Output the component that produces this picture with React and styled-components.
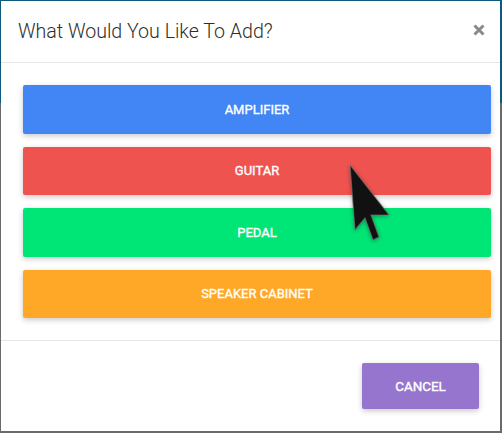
import React from "react";
import styled, { createGlobalStyle } from "styled-components";

const GlobalStyle = createGlobalStyle`
    html, body {
        margin: 0;
        padding: 0;
        width: 502px;
        height: 433px;
        overflow: hidden;
    }
    body {
        background: linear-gradient(
            to bottom,
            #0b5a7c 0px,
            #0b5a7c 103px,
            #6a6a6a 103px,
            #6a6a6a 100%
        );
        font-family: Roboto, "Liberation Sans", sans-serif;
    }
`;

const Modal = styled.div`
    position: relative;
    margin: 1px 2px 2px 1px;
    width: 499px;
    height: 430px;
    background: #fff;
    display: flex;
    flex-direction: column;
    box-sizing: border-box;
`;

const Header = styled.div`
    height: 62px;
    flex-shrink: 0;
    box-sizing: border-box;
    padding: 0 15px 0 17px;
    display: flex;
    align-items: center;
    justify-content: space-between;
    border-bottom: 1px solid #e6e6e6;
`;

const Title = styled.h4`
    margin: 0;
    font-size: 19.6px;
    font-weight: 300;
    color: #2e2e2e;
`;

const Close = styled.button`
    border: none;
    background: none;
    padding: 0;
    width: 12px;
    height: 12px;
    margin-top: -4px;
    cursor: pointer;
    display: flex;
`;

const Body = styled.div`
    padding: 22px 9px 22px 22px;
    display: flex;
    flex-direction: column;
    gap: 13px;
    border-bottom: 1px solid #e6e6e6;
`;

const Choice = styled.button`
    height: 48.5px;
    width: 100%;
    border: none;
    border-radius: 2px;
    background: ${props => props.color};
    color: #fff;
    font-family: Roboto, "Liberation Sans", sans-serif;
    font-size: 13px;
    font-weight: 400;
    -webkit-text-stroke: 0.35px #fff;
    text-transform: uppercase;
    box-shadow: 0 2px 5px rgba(0, 0, 0, 0.16), 0 2px 8px rgba(0, 0, 0, 0.06);
    cursor: pointer;
`;

const Footer = styled.div`
    flex: 1;
    display: flex;
    justify-content: flex-end;
    align-items: flex-start;
    padding: 22px 21px 0 0;
`;

const Cancel = styled(Choice)`
    width: 117px;
    height: 46px;
    font-size: 13.4px;
    background: #9575cd;
`;

const Cursor = styled.svg`
    position: absolute;
    left: 344px;
    top: 159px;
    pointer-events: none;
    filter: drop-shadow(0 1px 2px rgba(0, 0, 0, 0.35));
`;

const choices = [
    { label: "Amplifier", color: "#4285f4" },
    { label: "Guitar", color: "#ef5350" },
    { label: "Pedal", color: "#00e676" },
    { label: "Speaker Cabinet", color: "#ffa726" }
];

export default function App() {
    return (
        <>
            <GlobalStyle />
            <Modal>
                <Header>
                    <Title>What Would You Like To Add?</Title>
                    <Close aria-label="close">
                        <svg width="12" height="12" viewBox="0 0 12 12">
                            <path
                                d="M1.5 1.5 L10.5 10.5 M10.5 1.5 L1.5 10.5"
                                stroke="#8a8a8a"
                                strokeWidth="3"
                            />
                        </svg>
                    </Close>
                </Header>
                <Body>
                    {choices.map(c => (
                        <Choice key={c.label} color={c.color}>
                            {c.label}
                        </Choice>
                    ))}
                </Body>
                <Footer>
                    <Cancel>Cancel</Cancel>
                </Footer>
                <Cursor width="50" height="86" viewBox="344 159 50 86">
                    <polygon
                        points="349,164 354,229 364,217 372,239 378,236 370,214 388,214"
                        fill="#111"
                        stroke="rgba(120,120,120,0.6)"
                        strokeWidth="1.2"
                        strokeLinejoin="round"
                    />
                </Cursor>
            </Modal>
        </>
    );
}
